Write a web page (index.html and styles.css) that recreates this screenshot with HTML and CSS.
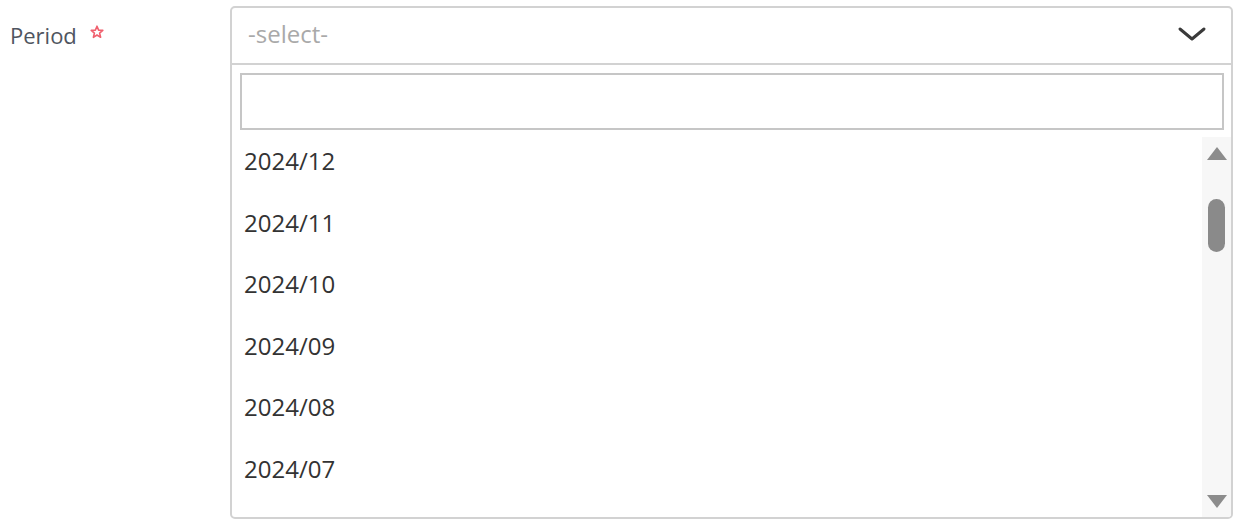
FILE: index.html
```html
<!DOCTYPE html>
<html lang="en">
<head>
<meta charset="utf-8">
<title>Period select</title>
<link rel="stylesheet" href="styles.css">
</head>
<body>
<div class="field">
  <label class="label">Period<svg class="req" width="14" height="14" viewBox="0 0 14 14"><path d="M7 1.2 L8.6 5.1 L12.8 5.4 L9.6 8.1 L10.6 12.3 L7 10 L3.4 12.3 L4.4 8.1 L1.2 5.4 L5.4 5.1 Z" fill="none" stroke="#f0606e" stroke-width="1.6" stroke-linejoin="round"/></svg></label>
  <div class="select">
    <div class="select-head">
      <span class="placeholder">-select-</span>
      <svg class="chevron" width="30" height="16" viewBox="0 0 30 16"><path d="M3 3 L15 13 L27 3" fill="none" stroke="#3a3a3a" stroke-width="3" stroke-linecap="round" stroke-linejoin="round"/></svg>
    </div>
    <div class="search-wrap"><div class="search"></div></div>
    <div class="list">
      <ul class="options">
        <li class="option">2024/12</li>
        <li class="option">2024/11</li>
        <li class="option">2024/10</li>
        <li class="option">2024/09</li>
        <li class="option">2024/08</li>
        <li class="option">2024/07</li>
      </ul>
      <div class="scrollbar">
        <svg class="arrow" width="22" height="15" viewBox="0 0 22 15"><path d="M11 1 L21 14 L1 14 Z" fill="#8c8c8c"/></svg>
        <div class="track"><div class="thumb"></div></div>
        <svg class="arrow" width="22" height="15" viewBox="0 0 22 15"><path d="M1 1 L21 1 L11 14 Z" fill="#8c8c8c"/></svg>
      </div>
    </div>
  </div>
</div>
</body>
</html>
```
FILE: styles.css
```css
html, body {
  margin: 0;
  padding: 0;
  background: #ffffff;
}
body {
  font-family: "Open Sans", "Noto Sans", sans-serif;
}
.field {
  display: flex;
  padding: 6px 5px 0 10px;
}
.label {
  width: 220px;
  flex: none;
  font-size: 22px;
  color: #4f5560;
  line-height: 28px;
  padding-top: 15px;
  box-sizing: border-box;
  height: 56px;
  display: flex;
  align-items: flex-start;
}
.req {
  display: block;
  margin: 4px 0 0 13px;
}
.select {
  flex: 1;
  height: 513px;
  border: 2px solid #d2d2d2;
  border-radius: 5px;
  box-sizing: border-box;
  display: flex;
  flex-direction: column;
  overflow: hidden;
}
.select-head {
  height: 55px;
  flex: none;
  border-bottom: 2px solid #d2d2d2;
  display: flex;
  align-items: center;
  justify-content: space-between;
  padding: 0 24px 0 16px;
}
.placeholder {
  font-size: 24px;
  color: #a9a9a9;
  position: relative;
  top: -2px;
}
.chevron {
  display: block;
  margin-top: -3px;
}
.search-wrap {
  padding: 8px 7px 7px 8px;
  flex: none;
}
.search {
  height: 57px;
  border: 2px solid #c6c6c6;
  box-sizing: border-box;
}
.list {
  flex: 1;
  display: flex;
  min-height: 0;
}
.options {
  list-style: none;
  margin: 0;
  padding: 0;
  flex: 1;
  overflow: hidden;
}
.option {
  height: 61.6px;
  box-sizing: border-box;
  padding: 8px 12px 0;
  font-size: 24px;
  line-height: 32px;
  color: #333333;
}
.scrollbar {
  width: 29px;
  flex: none;
  background: #f7f7f7;
  display: flex;
  flex-direction: column;
  align-items: center;
  padding: 9px 0 8px;
  box-sizing: border-box;
}
.arrow {
  display: block;
  flex: none;
}
.track {
  flex: 1;
  width: 100%;
  display: flex;
  justify-content: center;
  padding-top: 38px;
}
.thumb {
  width: 17px;
  height: 53px;
  border-radius: 9px;
  background: #8a8a8a;
}
```
